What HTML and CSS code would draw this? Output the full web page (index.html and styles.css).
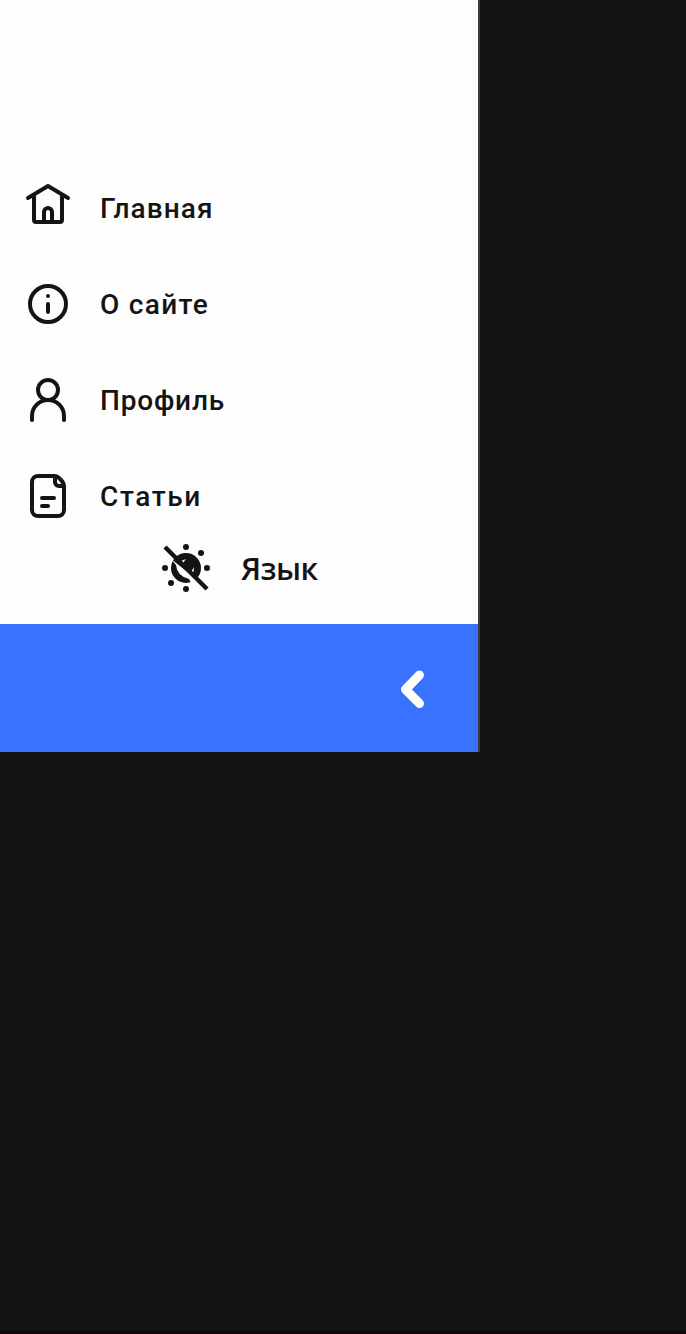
FILE: index.html
```html
<!DOCTYPE html>
<html lang="ru">
<head>
<meta charset="utf-8">
<title>Меню</title>
<link rel="stylesheet" href="styles.css">
</head>
<body>
<aside class="drawer">
  <nav class="menu">
    <a class="item"><svg class="icon" viewBox="0 0 48 48"><path d="M4 18 24 6 44 18M10 15V40Q10 42 12 42H36Q38 42 38 40V15M20 42V32a4 4 0 0 1 8 0V42"/></svg><span class="label home">Главная</span></a>
    <a class="item"><svg class="icon" viewBox="0 0 48 48"><circle cx="24" cy="24" r="18"/><path d="M24 24v8M24 16v.01"/></svg><span class="label about">О сайте</span></a>
    <a class="item"><svg class="icon" viewBox="0 0 48 48"><circle cx="24" cy="14" r="10"/><path d="M8 44V40a16 16 0 0 1 32 0v4"/></svg><span class="label profile">Профиль</span></a>
    <a class="item"><svg class="icon" viewBox="0 0 48 48"><path d="M14 4H30Q34 4 37 8Q40 11 40 15V38a6 6 0 0 1-6 6H14a6 6 0 0 1-6-6V10a6 6 0 0 1 6-6ZM31 5v5a4 4 0 0 0 4 4h4M18 26h12M18 34h6"/></svg><span class="label articles">Статьи</span></a>
  </nav>
  <div class="language">
    <svg class="sun" viewBox="0 0 48 48"><circle cx="24" cy="24" r="15"/><path class="cut" d="m19 17 5-2-3 4ZM29 28l3-5-.5 5ZM9 15 14 21Q15 32 27 35L29 39 37 37Z"/><circle cx="24" cy="3" r="3"/><circle cx="39" cy="9" r="3"/><circle cx="45" cy="24" r="3"/><circle cx="24" cy="45" r="3"/><circle cx="9" cy="39" r="3"/><circle cx="3" cy="24" r="3"/><path class="slash" d="m3 3 42 42"/></svg>
    <span class="language-label">Язык</span>
  </div>
  <div class="footer"><svg class="chevron" viewBox="0 0 24 40"><path d="M19.5 6 5.5 20.5 19.5 34.5"/></svg></div>
</aside>
<div class="base"></div>
</body>
</html>
```
FILE: styles.css
```css
* { box-sizing: border-box; }
body { margin: 0; height: 1334px; display: flex; flex-direction: column; justify-content: space-between; background: #141416; overflow: hidden; }
.drawer { width: 480px; height: 752px; border-right: 2px solid #373a46; background: #fdfdfd; color: #141416; display: flex; flex-direction: column; }
.menu { padding-top: 160px; }
.item { height: 96px; padding-left: 24px; display: flex; align-items: center; gap: 28px; }
.icon { width: 48px; height: 48px; fill: none; stroke: #141416; stroke-width: 4; stroke-linecap: round; stroke-linejoin: round; }
.item:first-child .icon { margin-top: -8px; }
.label { padding-top: 2px; font: 500 28px/36px Roboto, sans-serif; white-space: nowrap; }
.home { letter-spacing: 1.1px; }
.about { letter-spacing: 1.3px; }
.profile { letter-spacing: .8px; }
.articles { letter-spacing: 1.6px; }
.language { height: 48px; display: flex; align-items: center; padding-left: 162px; gap: 31px; }
.sun { width: 48px; height: 48px; fill: #141416; }
.cut { fill: #fdfdfd; }
.slash { stroke: #141416; stroke-width: 4.5; }
.language-label { font: 600 31px/40px "Open Sans", sans-serif; letter-spacing: -.6px; }
.footer { height: 128px; margin-top: 32px; background: #3872ff; display: flex; align-items: center; justify-content: flex-end; padding-right: 54px; }
.chevron { width: 24px; height: 40px; margin-top: 2px; fill: none; stroke: #fff; stroke-width: 9; stroke-linecap: round; stroke-linejoin: round; }
.base { height: 3px; background: #17070b; }
```
